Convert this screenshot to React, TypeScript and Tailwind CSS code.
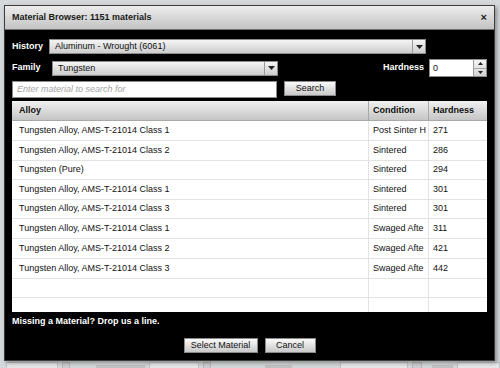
import React from 'react'

type Row = { alloy: string; condition: string; hardness: string }

// condition texts are cut by the narrow column in the original
const ROWS: Row[] = [
  { alloy: 'Tungsten Alloy, AMS-T-21014 Class 1', condition: 'Post Sinter H', hardness: '271' },
  { alloy: 'Tungsten Alloy, AMS-T-21014 Class 2', condition: 'Sintered', hardness: '286' },
  { alloy: 'Tungsten (Pure)', condition: 'Sintered', hardness: '294' },
  { alloy: 'Tungsten Alloy, AMS-T-21014 Class 1', condition: 'Sintered', hardness: '301' },
  { alloy: 'Tungsten Alloy, AMS-T-21014 Class 3', condition: 'Sintered', hardness: '301' },
  { alloy: 'Tungsten Alloy, AMS-T-21014 Class 1', condition: 'Swaged Afte', hardness: '311' },
  { alloy: 'Tungsten Alloy, AMS-T-21014 Class 2', condition: 'Swaged Afte', hardness: '421' },
  { alloy: 'Tungsten Alloy, AMS-T-21014 Class 3', condition: 'Swaged Afte', hardness: '442' },
]

// the source image was scaled, so rows alternate between 20 and 19px
const ROW_H = ['h-[20px]', 'h-[20px]', 'h-[19px]', 'h-[20px]', 'h-[19px]', 'h-[20px]', 'h-[20px]', 'h-[20px]', 'h-[19px]']

const COLS = 'grid grid-cols-[356px_60px_1fr]'

function Arrow() {
  return (
    <svg width="7" height="4" viewBox="0 0 7 4"><path d="M0 0h7L3.5 4z" fill="#222" /></svg>
  )
}

function Select({ value, width }: { value: string; width: string }) {
  return (
    <div className={`${width} h-[15px] flex items-stretch border border-[#8c8c8c] bg-gradient-to-b from-[#f5f5f5] to-[#cdcdcd]`}>
      <span className="flex-1 pl-[5px] text-[9px] leading-[13px] text-[#111]">{value}</span>
      <span className="w-[13px] flex items-center justify-center border-l border-[#9a9a9a]">
        <Arrow />
      </span>
    </div>
  )
}

function Button({ label, width }: { label: string; width: string }) {
  return (
    <button className={`${width} h-[15px] border border-[#8a8a8a] bg-gradient-to-b from-[#fafafa] to-[#c9c9c9] text-[9px] leading-[13px] text-[#111]`}>
      {label}
    </button>
  )
}

export default function App() {
  return (
    <div className="relative w-[500px] h-[368px] overflow-hidden bg-[#d5d8da] font-['Liberation_Sans',Arial,sans-serif]">
      {/* page behind the modal */}
      <div className="pt-[362px] pl-[6px] flex items-start gap-[4px] opacity-70">
        <div className="w-[54px] h-[8px] bg-[#eceeef] border border-[#b9bcbe]" />
        <div className="w-[8px] h-[8px] bg-[#c9cccf] border border-[#a9acae]" />
        <div className="ml-[22px] w-[50px] h-[4px] mt-[3px] bg-[#b8bbbd]" />
        <div className="w-[52px] h-[8px] bg-[#eceeef] border border-[#b9bcbe]" />
        <div className="w-[8px] h-[8px] bg-[#c9cccf] border border-[#a9acae]" />
        <div className="ml-[50px] w-[28px] h-[4px] mt-[3px] bg-[#b8bbbd]" />
        <div className="ml-[44px] w-[70px] h-[8px] bg-[#eceeef] border border-[#b9bcbe]" />
        <div className="w-[10px] h-[8px] bg-[#c9cccf] border border-[#a9acae]" />
        <div className="ml-[6px] w-[22px] h-[4px] mt-[3px] bg-[#b8bbbd]" />
        <div className="w-[44px] h-[8px] bg-[#eceeef] border border-[#b9bcbe]" />
      </div>

      {/* modal */}
      <div className="absolute left-[4px] top-[5px] w-[491px] h-[356px] flex flex-col border border-[#3c3c3c] shadow-[2px_2px_4px_rgba(0,0,0,0.35)]">
        <div className="h-[24px] shrink-0 flex items-center justify-between pl-[7px] pr-[7px] bg-gradient-to-b from-[#ededed] to-[#c3c3c3] border-b border-[#6f6f6f]">
          <span className="text-[9px] font-bold text-[#1a1a1a]">Material Browser: 1151 materials</span>
          <span className="text-[11px] font-bold leading-none text-[#222]">×</span>
        </div>

        <div className="flex-1 flex flex-col bg-black px-[7px] pt-[9px]">
          <div className="h-[15px] flex items-center">
            <span className="w-[37px] text-[9px] font-bold text-white">History</span>
            <Select value="Aluminum - Wrought (6061)" width="w-[377px]" />
          </div>

          <div className="mt-[5px] h-[18px] flex items-center">
            <span className="w-[40px] text-[9px] font-bold text-white">Family</span>
            <Select value="Tungsten" width="w-[226px]" />
            <span className="ml-auto mr-[5px] text-[9px] font-bold text-white">Hardness</span>
            <div className="w-[58px] h-[18px] flex border border-[#8c8c8c] bg-white">
              <span className="flex-1 pl-[3px] text-[9px] leading-[16px] text-[#111]">0</span>
              <span className="w-[13px] flex flex-col border-l border-[#9a9a9a] bg-gradient-to-b from-[#f5f5f5] to-[#d2d2d2]">
                <span className="flex-1 flex items-center justify-center border-b border-[#a8a8a8]">
                  <svg width="5" height="3" viewBox="0 0 5 3"><path d="M0 3h5L2.5 0z" fill="#222" /></svg>
                </span>
                <span className="flex-1 flex items-center justify-center">
                  <svg width="5" height="3" viewBox="0 0 5 3"><path d="M0 0h5L2.5 3z" fill="#222" /></svg>
                </span>
              </span>
            </div>
          </div>

          <div className="mt-[4px] h-[17px] flex items-end">
            <div className="w-[265px] h-[17px] border border-[#8c8c8c] bg-white pl-[4px] text-[9px] leading-[15px] italic text-[#a4a4a4]">
              Enter material to search for
            </div>
            <div className="ml-[7px]">
              <Button label="Search" width="w-[52px]" />
            </div>
          </div>

          <div className="mt-[3px] h-[211px] flex flex-col bg-white overflow-hidden">
            <div className={`${COLS} h-[20px] shrink-0 bg-gradient-to-b from-[#f1f1f1] to-[#c5c5c5] border-b border-[#a9a9a9] text-[9px] font-bold text-[#111] leading-[19px]`}>
              <span className="pl-[7px]">Alloy</span>
              <span className="pl-[4px] border-l border-[#a9a9a9]">Condition</span>
              <span className="pl-[4px] border-l border-[#a9a9a9]">Hardness</span>
            </div>

            {ROW_H.map((h, i) => {
              const r = ROWS[i]
              return (
                <div key={i} className={`${COLS} ${h} shrink-0 border-b border-[#e3e3e3] text-[9px] text-[#111]`}>
                  <span className="pl-[7px] flex items-center">{r?.alloy}</span>
                  <span className="pl-[4px] pr-[3px] flex items-center border-l border-[#e3e3e3] min-w-0 overflow-hidden whitespace-nowrap">
                    {r?.condition}
                  </span>
                  <span className="pl-[4px] flex items-center border-l border-[#e3e3e3]">{r?.hardness}</span>
                </div>
              )
            })}

            <div className={`${COLS} flex-1`}>
              <span />
              <span className="border-l border-[#e3e3e3]" />
              <span className="border-l border-[#e3e3e3]" />
            </div>
          </div>

          <p className="mt-[3px] text-[9px] leading-[12px] font-bold text-white">Missing a Material? Drop us a line.</p>

          <div className="mt-[11px] flex justify-center gap-[7px]">
            <Button label="Select Material" width="w-[74px]" />
            <Button label="Cancel" width="w-[51px]" />
          </div>
        </div>
      </div>
    </div>
  )
}
